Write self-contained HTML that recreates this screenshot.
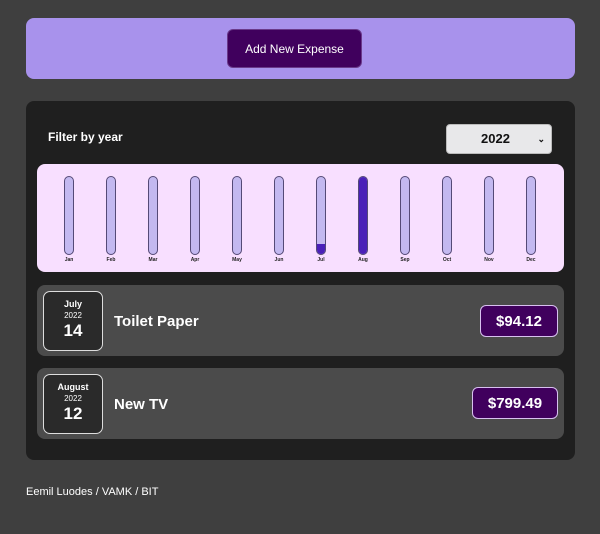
<!DOCTYPE html>
<html><head><style>
*{box-sizing:border-box;margin:0;padding:0}
body{width:600px;height:534px;background:#3f3f3f;font-family:"Liberation Sans",sans-serif;position:relative;overflow:hidden;color:#fff}
.a{position:absolute}
.top{left:26px;top:18px;width:549px;height:61px;background:#a892ec;border-radius:8px}
.btn{left:227px;top:29px;width:135px;height:39px;background:#40005d;border-radius:6px;border:1px solid #6a3a8a;font-size:12px;display:flex;align-items:center;justify-content:center}
.panel{left:26px;top:101px;width:549px;height:359px;background:#1f1f1f;border-radius:8px}
.sel{left:446px;top:124px;width:106px;height:30px;background:#e8e8ea;border-radius:4px;border:1px solid #bbb;color:#111;font-weight:bold;font-size:13px;padding-left:34px;line-height:28px}
.chart{left:37px;top:164px;width:527px;height:108px;background:#f8dfff;border-radius:8px}
.bar{width:10px;height:79px;top:176px;background:#c3b8f0;border:1px solid #554a77;border-radius:6px;overflow:hidden}
.fill{position:absolute;left:0;right:0;bottom:0;background:#4a20b8}
.lbl{top:257px;width:30px;text-align:center;font-size:5px;line-height:6px;font-weight:bold;color:#222}
.exp{left:37px;width:527px;height:71px;background:#4b4b4b;border-radius:8px}
.date{width:60px;height:60px;background:#2a2a2a;border:1px solid #ddd;border-radius:7px;text-align:center;font-weight:bold}
.title{font-size:15px;font-weight:bold}
.price{height:32px;background:#40005d;border:1px solid #d8c0f0;border-radius:6px;font-size:15px;font-weight:bold;display:flex;align-items:center;justify-content:center}
</style></head><body>
<div class="a top"></div>
<div class="a btn">Add New Expense</div>
<div class="a panel"></div>
<div class="a" style="left:48px;top:130px;font-size:12px;font-weight:bold">Filter by year</div>
<div class="a sel">2022<span style="position:absolute;right:6px;top:0;font-size:9px">&#8964;</span></div>
<div class="a chart"></div>
<div class="a bar" style="left:64px"></div>
<div class="a bar" style="left:106px"></div>
<div class="a bar" style="left:148px"></div>
<div class="a bar" style="left:190px"></div>
<div class="a bar" style="left:232px"></div>
<div class="a bar" style="left:274px"></div>
<div class="a bar" style="left:316px"><div class="fill" style="height:10px"></div></div>
<div class="a bar" style="left:358px"><div class="fill" style="height:100%"></div></div>
<div class="a bar" style="left:400px"></div>
<div class="a bar" style="left:442px"></div>
<div class="a bar" style="left:484px"></div>
<div class="a bar" style="left:526px"></div>
<div class="a lbl" style="left:54px">Jan</div>
<div class="a lbl" style="left:96px">Feb</div>
<div class="a lbl" style="left:138px">Mar</div>
<div class="a lbl" style="left:180px">Apr</div>
<div class="a lbl" style="left:222px">May</div>
<div class="a lbl" style="left:264px">Jun</div>
<div class="a lbl" style="left:306px">Jul</div>
<div class="a lbl" style="left:348px">Aug</div>
<div class="a lbl" style="left:390px">Sep</div>
<div class="a lbl" style="left:432px">Oct</div>
<div class="a lbl" style="left:474px">Nov</div>
<div class="a lbl" style="left:516px">Dec</div>

<div class="a exp" style="top:285px"></div>
<div class="a date" style="left:43px;top:291px"><div style="font-size:9px;margin-top:7px">July</div><div style="font-size:8px;font-weight:normal;margin-top:2px">2022</div><div style="font-size:17px;margin-top:1px">14</div></div>
<div class="a title" style="left:114px;top:313px">Toilet Paper</div>
<div class="a price" style="left:480px;top:305px;width:78px">$94.12</div>

<div class="a exp" style="top:368px"></div>
<div class="a date" style="left:43px;top:374px"><div style="font-size:9px;margin-top:7px">August</div><div style="font-size:8px;font-weight:normal;margin-top:2px">2022</div><div style="font-size:17px;margin-top:1px">12</div></div>
<div class="a title" style="left:114px;top:396px">New TV</div>
<div class="a price" style="left:472px;top:387px;width:86px">$799.49</div>

<div class="a" style="left:26px;top:486px;font-size:11px;color:#fff">Eemil Luodes / VAMK / BIT</div>
</body></html>
